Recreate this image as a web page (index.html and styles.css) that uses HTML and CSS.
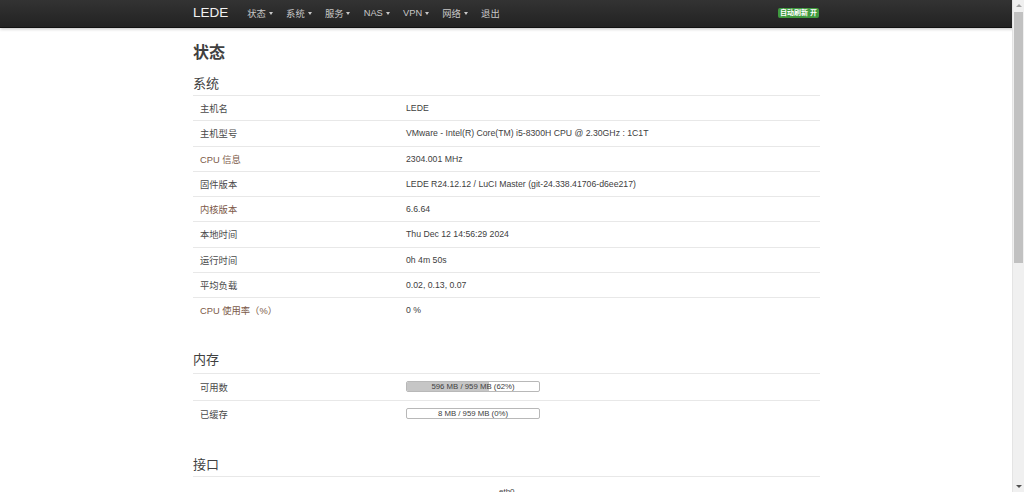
FILE: index.html
```html
<!DOCTYPE html>
<html lang="zh">
<head>
<meta charset="utf-8">
<title>状态 - LEDE</title>
<link rel="stylesheet" href="styles.css">
</head>
<body>
<header class="navbar">
  <div class="container nav-inner">
    <a class="brand">LEDE</a>
    <ul class="menu">
      <li>状态 <span class="caret"></span></li>
      <li>系统 <span class="caret"></span></li>
      <li>服务 <span class="caret"></span></li>
      <li>NAS <span class="caret"></span></li>
      <li>VPN <span class="caret"></span></li>
      <li>网络 <span class="caret"></span></li>
      <li>退出</li>
    </ul>
    <span class="badge">自动刷新 开</span>
  </div>
</header>
<main class="container">
  <h1 class="title">状态</h1>

  <section class="section">
    <h2 class="section-title">系统</h2>
    <div class="table">
      <div class="row"><div class="label">主机名</div><div class="value">LEDE</div></div>
      <div class="row"><div class="label">主机型号</div><div class="value">VMware - Intel(R) Core(TM) i5-8300H CPU @ 2.30GHz : 1C1T</div></div>
      <div class="row"><div class="label link">CPU 信息</div><div class="value">2304.001 MHz</div></div>
      <div class="row"><div class="label">固件版本</div><div class="value">LEDE R24.12.12 / LuCI Master (git-24.338.41706-d6ee217)</div></div>
      <div class="row"><div class="label link">内核版本</div><div class="value">6.6.64</div></div>
      <div class="row"><div class="label">本地时间</div><div class="value">Thu Dec 12 14:56:29 2024</div></div>
      <div class="row"><div class="label">运行时间</div><div class="value">0h 4m 50s</div></div>
      <div class="row"><div class="label">平均负载</div><div class="value">0.02, 0.13, 0.07</div></div>
      <div class="row"><div class="label link">CPU 使用率（%）</div><div class="value">0 %</div></div>
    </div>
  </section>

  <section class="section mem">
    <h2 class="section-title">内存</h2>
    <div class="table">
      <div class="row"><div class="label">可用数</div><div class="value"><div class="bar"><div class="fill" style="width:62%"></div><span class="bar-text">596 MB / 959 MB (62%)</span></div></div></div>
      <div class="row"><div class="label">已缓存</div><div class="value"><div class="bar"><div class="fill" style="width:0%"></div><span class="bar-text">8 MB / 959 MB (0%)</span></div></div></div>
    </div>
  </section>

  <section class="section iface">
    <h2 class="section-title">接口</h2>
    <div class="iface-body">
      <div class="iface-name">eth0</div>
    </div>
  </section>
</main>
<div class="scrollbar" aria-hidden="true">
  <span class="arrow up"></span>
  <div class="thumb"></div>
  <span class="arrow down"></span>
</div>
</body>
</html>
```
FILE: styles.css
```css
html, body {
  margin: 0;
  padding: 0;
  background: #fff;
}
body {
  font-family: "Liberation Sans", "Noto Sans CJK SC", Arial, sans-serif;
  font-size: 9px;
  color: #404040;
}
.container {
  width: 627px;
  margin-left: 193px;
}
.navbar {
  height: 27px;
  background: linear-gradient(#333333, #222222);
  border-bottom: 1px solid #111;
  box-shadow: 0 1px 3px rgba(0,0,0,0.25);
}
.nav-inner {
  display: flex;
  align-items: center;
  height: 27px;
}
.brand {
  color: #f2f2f2;
  font-size: 13.5px;
  margin-right: 19px;
  margin-top: -2px;
}
.menu {
  display: flex;
  list-style: none;
  margin: -2px 0 0;
  padding: 0;
  flex: 1;
}
.menu li {
  color: #c8c8c8;
  font-size: 9.3px;
  margin-right: 13.2px;
  display: flex;
  align-items: center;
  gap: 3px;
}
.caret {
  display: inline-block;
  width: 0;
  height: 0;
  border-left: 2.5px solid transparent;
  border-right: 2.5px solid transparent;
  border-top: 3px solid #c8c8c8;
  margin-top: 1px;
}
.badge {
  background: #3f9a3f;
  color: #fff;
  font-size: 7px;
  font-weight: bold;
  padding: 1px 2px;
  border-radius: 2px;
  line-height: 8px;
  margin-right: 1px;
  margin-top: -1px;
}
.title {
  font-size: 16px;
  font-weight: bold;
  color: #404040;
  margin: 15px 0 0;
  line-height: 20px;
}
.section-title {
  font-size: 13px;
  font-weight: normal;
  color: #404040;
  margin: 0;
  line-height: 18px;
  padding-bottom: 2px;
  border-bottom: 1px solid #e8e8e8;
}
.section {
  margin-top: 12px;
}
.section.mem {
  margin-top: 29px;
}
.section.mem .section-title {
  padding-bottom: 4px;
}
.section.iface {
  margin-top: 29px;
}
.row {
  display: flex;
  align-items: center;
  height: 24.25px;
  border-bottom: 1px solid #e8e8e8;
}
.row:last-child {
  border-bottom: none;
}
.mem .row {
  height: 26px;
}
.label {
  width: 206px;
  padding-left: 7px;
  font-size: 9.3px;
  color: #4a4a4a;
}
.label.link {
  color: #7c5a48;
}
.value {
  flex: 1;
  font-size: 8.7px;
  color: #404040;
}
.bar {
  position: relative;
  width: 132px;
  height: 9px;
  border: 1px solid #b8b8b8;
  border-radius: 2px;
  background: #fff;
  overflow: hidden;
  margin-bottom: 1px;
}
.fill {
  height: 100%;
  background: #c6c6c6;
}
.bar-text {
  position: absolute;
  left: 0;
  right: 0;
  top: 0;
  line-height: 9px;
  text-align: center;
  font-size: 7.8px;
  color: #404040;
}
.iface-body {
  padding: 10px 0 40px 306px;
}
.iface-name {
  font-size: 8px;
  color: #404040;
}
.scrollbar {
  position: fixed;
  top: 0;
  right: 0;
  width: 11px;
  height: 100%;
  background: #f0f0f0;
  border-left: 1px solid #e4e4e4;
  display: flex;
  flex-direction: column;
  align-items: center;
}
.thumb {
  width: 9px;
  height: 251px;
  background: #c1c1c1;
  margin-top: 5px;
}
.arrow {
  width: 0;
  height: 0;
  border-left: 3px solid transparent;
  border-right: 3px solid transparent;
}
.arrow.up {
  border-bottom: 3px solid #a3a3a3;
  margin-top: 4px;
}
.arrow.down {
  border-top: 3px solid #505050;
  margin-top: auto;
  margin-bottom: 4px;
}
```
